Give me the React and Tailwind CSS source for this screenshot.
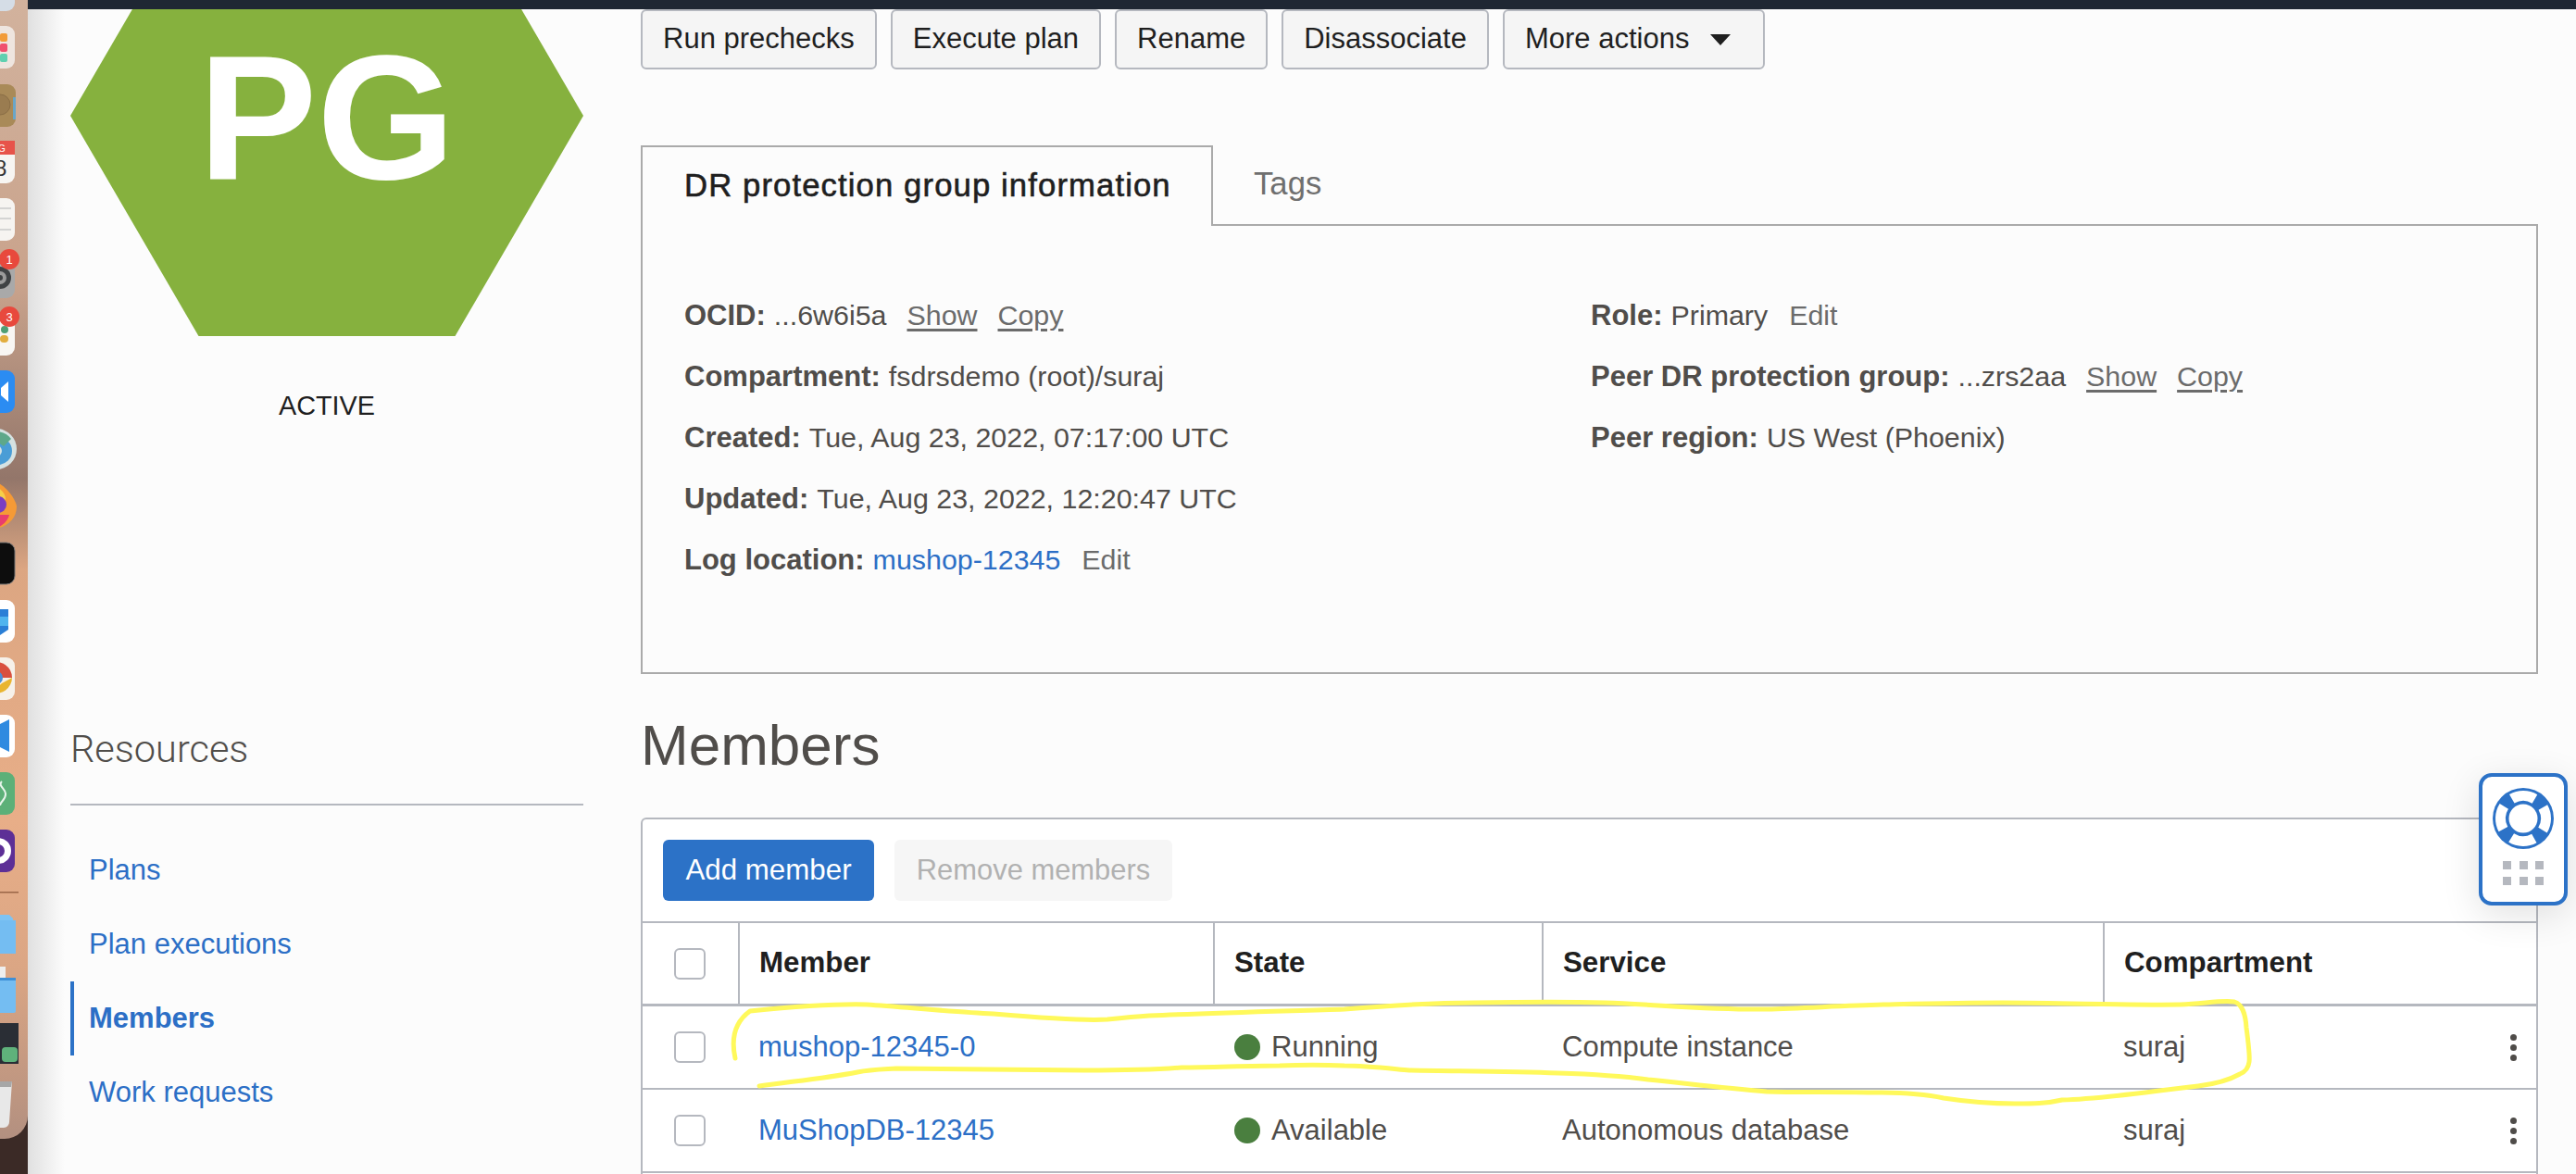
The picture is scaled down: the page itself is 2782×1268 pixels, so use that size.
import React from 'react';

const Dock = () => (
  <svg width="30" height="1268" viewBox="0 0 30 1268" className="block shrink-0">
    <defs>
      <linearGradient id="dockBg" x1="0" y1="0" x2="0" y2="1">
        <stop offset="0" stopColor="#d2b29d" />
        <stop offset="0.25" stopColor="#c9a38c" />
        <stop offset="0.42" stopColor="#93766a" />
        <stop offset="0.5" stopColor="#dca682" />
        <stop offset="0.72" stopColor="#e8ae88" />
        <stop offset="0.85" stopColor="#dba684" />
        <stop offset="1" stopColor="#b39080" />
      </linearGradient>
    </defs>
    <rect width="30" height="1268" fill="#3b2a26" />
    <path d="M0 0H30V1205a25 25 0 0 1 -25 25H0Z" fill="url(#dockBg)" />
    {/* launcher + first icons */}
    <rect x="-20" y="-30" width="36" height="42" rx="9" fill="#d5dde6" />
    <rect x="-20" y="28" width="36" height="46" rx="9" fill="#eee5df" />
    <rect x="0" y="36" width="8" height="9" rx="2" fill="#f29b38" />
    <rect x="0" y="47" width="8" height="9" rx="2" fill="#f0506e" />
    <rect x="0" y="58" width="8" height="9" rx="2" fill="#5fd0b0" />
    <rect x="-20" y="91" width="37" height="46" rx="9" fill="#a98a58" />
    <circle cx="0" cy="113" r="11" fill="#9a7c50" stroke="#8a6e46" />
    <rect x="14" y="105" width="3" height="24" fill="#6aa6c8" />
    <rect x="-20" y="152" width="36" height="46" rx="9" fill="#f7f5f2" />
    <path d="M-20 161a9 9 0 0 1 9-9H16V167H-20Z" fill="#e7534a" />
    <text x="-2" y="164" fontSize="10" fill="#fff" fontFamily="Liberation Sans">G</text>
    <text x="-6" y="190" fontSize="24" fill="#333" fontFamily="Liberation Sans">8</text>
    <rect x="-20" y="214" width="36" height="46" rx="9" fill="#f6f4f1" />
    <path d="M0 225H12M0 236H12M0 248H12" stroke="#c9c9c9" strokeWidth="1.5" />
    {/* settings */}
    <rect x="-20" y="276" width="36" height="46" rx="9" fill="#a9a9a9" />
    <circle cx="0" cy="300" r="12" fill="#3f4244" />
    <circle cx="0" cy="300" r="7" fill="#9b9b9b" />
    <circle cx="0" cy="300" r="3" fill="#3f4244" />
    <circle cx="10" cy="280" r="11" fill="#e8493d" />
    <text x="10" y="285" textAnchor="middle" fontSize="13" fill="#fff" fontFamily="Liberation Sans">1</text>
    {/* slack */}
    <rect x="-20" y="338" width="36" height="46" rx="9" fill="#f8f6f3" />
    <rect x="0" y="362" width="9" height="8" rx="4" fill="#e2ad3f" />
    <circle cx="5" cy="356" r="4" fill="#4f9e74" />
    <circle cx="10" cy="342" r="11" fill="#e8493d" />
    <text x="10" y="347" textAnchor="middle" fontSize="13" fill="#fff" fontFamily="Liberation Sans">3</text>
    {/* video */}
    <rect x="-20" y="400" width="36" height="46" rx="9" fill="#2b8cf2" />
    <path d="M9 412V434L1 427V419Z" fill="#fff" />
    {/* browsers */}
    <circle cx="-4" cy="485" r="22" fill="#d6e2e2" />
    <circle cx="-2" cy="487" r="15" fill="#4a9dd6" />
    <path d="M-14 470a18 18 0 0 1 26 4L4 482Z" fill="#5da88a" />
    <circle cx="-4" cy="487" r="6" fill="#d6e2e2" />
    <path d="M-6 520c14 4 24 22 24 27c0 14-12 24-26 24H-20V530Z" fill="#f59a36" />
    <path d="M-10 525c10 0 16 8 16 14l-16 20Z" fill="#f5d04a" />
    <circle cx="-2" cy="545" r="9" fill="#7a3dc2" />
    <path d="M-20 556H10c-2 8-10 15-20 15H-20Z" fill="#e83d6e" />
    <rect x="-20" y="586" width="36" height="45" rx="9" fill="#0d0d0d" stroke="#777" />
    <rect x="-20" y="648" width="36" height="46" rx="9" fill="#fff" />
    <path d="M0 658H9V680L0 686Z" fill="#2a7fd6" />
    <rect x="0" y="666" width="9" height="10" fill="#4fb4ee" />
    <rect x="-20" y="710" width="36" height="46" rx="9" fill="#f6f1ea" />
    <path d="M-10 716a17 17 0 0 1 23 16H-4Z" fill="#d9503f" />
    <path d="M13 732a17 17 0 0 1 -22 16L2 738Z" fill="#e9b530" />
    <circle cx="-4" cy="732" r="7" fill="#4a90d9" />
    <rect x="-20" y="772" width="36" height="46" rx="9" fill="#fff" />
    <path d="M0 782L10 777V812L0 807Z" fill="#2f8ae0" />
    <rect x="-20" y="834" width="36" height="46" rx="9" fill="#5cb078" />
    <path d="M2 844c-5 5 5 8 4 14c0 6-6 8-6 12" fill="none" stroke="#e9f5ec" strokeWidth="2" />
    <rect x="-20" y="896" width="36" height="46" rx="9" fill="#5d2f96" />
    <circle cx="-2" cy="919" r="14" fill="#fff" />
    <circle cx="-2" cy="919" r="7" fill="#5d2f96" />
    <rect x="0" y="963" width="20" height="1.5" fill="#9a6547" />
    {/* folders */}
    <path d="M-10 988H10l4 4V1030H-10Z" fill="#7ec3f3" />
    <rect x="-10" y="994" width="27" height="36" fill="#74bdf2" />
    <rect x="0" y="1044" width="6" height="12" fill="#eee" />
    <rect x="-10" y="1056" width="27" height="38" rx="2" fill="#74bdf2" />
    <rect x="-10" y="1056" width="27" height="3" fill="#3e8fd6" />
    <rect x="-10" y="1105" width="30" height="44" fill="#2a2e35" />
    <rect x="2" y="1131" width="17" height="16" rx="4" fill="#5fb27b" />
    <path d="M-6 1168H13L10 1212a6 6 0 0 1 -6 6H-6Z" fill="#e8e8e8" />
    <path d="M-6 1168H13L12 1174H-6Z" fill="#a7a7a7" />
  </svg>
);

const Btn = ({ children, className = 'px-[22px]' }) => (
  <button className={`h-[65px] bg-[#f5f5f5] border-2 border-[#b5b8bf] rounded-[6px] text-[31px] text-[#1f1f1f] flex items-center whitespace-nowrap ${className}`}>
    {children}
  </button>
);

const Detail = ({ label, children }) => (
  <div className="h-[66px] flex items-center whitespace-nowrap text-[30.4px] text-[#504d4a]">
    <span className="font-bold text-[31px] mr-[9px]">{label}</span>
    {children}
  </div>
);

const Show = ({ children }) => <span className="ml-[22px] text-[#6b6b6b] underline underline-offset-[4px]">{children}</span>;
const Edit = () => <span className="ml-[23px] text-[#6b6b6b]">Edit</span>;

const Checkbox = () => <span className="block w-[34px] h-[34px] rounded-[6px] border-2 border-[#b5b8bf] bg-white" />;

const Kebab = () => (
  <span className="flex flex-col gap-[4px] items-center">
    <span className="w-[7px] h-[7px] rounded-full bg-[#4f4c49]" />
    <span className="w-[7px] h-[7px] rounded-full bg-[#4f4c49]" />
    <span className="w-[7px] h-[7px] rounded-full bg-[#4f4c49]" />
  </span>
);

const rowGrid = 'grid grid-cols-[103px_513px_355px_606px_1fr] items-center';

const MemberRow = ({ name, state, service }) => (
  <div className={`${rowGrid} h-[90px] border-b-2 border-[#b5b8bf] text-[31px] text-[#504d4a]`}>
    <div className="pl-[34px]"><Checkbox /></div>
    <div className="pl-[22px] text-[#2c6fc6]">{name}</div>
    <div className="pl-[23px] flex items-center gap-[12px]">
      <span className="w-[28px] h-[28px] rounded-full bg-[#4a7f3f]" />
      {state}
    </div>
    <div className="pl-[22px]">{service}</div>
    <div className="pl-[22px] pr-[21px] flex items-center justify-between">
      suraj
      <Kebab />
    </div>
  </div>
);

const HeadCell = ({ children }) => (
  <div className="h-full flex items-center pl-[21px] border-l-2 border-[#b5b8bf] font-bold text-[#1f1f1f]">{children}</div>
);

const NavItem = ({ active, children }) => (
  <div className={`h-[80px] flex items-center text-[31px] text-[#2c6fc6] ${active ? 'border-l-4 border-[#2c72c7] pl-[16px] font-bold' : 'pl-[20px]'}`}>
    {children}
  </div>
);

export default function App() {
  return (
    <div className="relative flex w-[2782px] h-[1268px] overflow-hidden bg-[#fcfcfc] font-['Liberation_Sans',Arial,sans-serif]">
      <Dock />

      <div className="relative flex-1 min-w-0 flex flex-col">
        <div className="h-[10px] shrink-0 bg-[#1f2733] relative z-10" />
        <div className="flex flex-1 min-h-0">
          {/* Left column */}
          <aside className="w-[662px] shrink-0 pl-[46px] pr-[62px]">
            <div className="-mt-[123px] h-[476px] pt-[144px] bg-[#86b13e] [clip-path:polygon(25%_0,75%_0,100%_50%,75%_100%,25%_100%,0_50%)] text-center text-white font-bold text-[192px] leading-none">
              PG
            </div>
            <div className="mt-[58px] text-center text-[28.8px] leading-[34px] text-[#1f1f1f]">ACTIVE</div>
            <div className="mt-[329px] pb-[34px] border-b-2 border-[#b5b8bf] font-['Roboto',sans-serif] font-light text-[41.5px] leading-[50px] text-[#504d4a]">
              Resources
            </div>
            <nav className="mt-[30px]">
              <NavItem>Plans</NavItem>
              <NavItem>Plan executions</NavItem>
              <NavItem active>Members</NavItem>
              <NavItem>Work requests</NavItem>
            </nav>
          </aside>

          {/* Main column */}
          <main className="w-[2049px] shrink-0">
            <div className="flex gap-[15px]">
              <Btn>Run prechecks</Btn>
              <Btn>Execute plan</Btn>
              <Btn>Rename</Btn>
              <Btn>Disassociate</Btn>
              <Btn className="pl-[22px] pr-[35px]">
                More actions
                <svg width="22" height="12" viewBox="0 0 22 12" className="ml-[23px]"><path d="M0 0H22L11 12Z" fill="#1f1f1f" /></svg>
              </Btn>
            </div>

            <div className="mt-[82px] flex h-[87px]">
              <div className="w-[618px] border-2 border-b-0 border-[#aaaaaa] flex items-center pl-[45px] pb-[2px] text-[34.7px] tracking-[1.1px] text-[#1f1f1f] [-webkit-text-stroke:0.6px_#1f1f1f]">
                DR protection group information
              </div>
              <div className="flex-1 border-b-2 border-[#aaaaaa] flex items-center pl-[44px] pb-[2px] text-[34.7px] text-[#6f6f6f]">Tags</div>
            </div>
            <div className="h-[484px] border-2 border-t-0 border-[#aaaaaa] pt-[64px] pl-[45px] grid grid-cols-[979px_1fr]">
              <div>
                <Detail label="OCID:">...6w6i5a<Show>Show</Show><Show>Copy</Show></Detail>
                <Detail label="Compartment:">fsdrsdemo (root)/suraj</Detail>
                <Detail label="Created:">Tue, Aug 23, 2022, 07:17:00 UTC</Detail>
                <Detail label="Updated:">Tue, Aug 23, 2022, 12:20:47 UTC</Detail>
                <Detail label="Log location:"><span className="text-[#2c6fc6]">mushop-12345</span><Edit /></Detail>
              </div>
              <div>
                <Detail label="Role:">Primary<Edit /></Detail>
                <Detail label="Peer DR protection group:">...zrs2aa<Show>Show</Show><Show>Copy</Show></Detail>
                <Detail label="Peer region:">US West (Phoenix)</Detail>
              </div>
            </div>

            <h2 className="mt-[42px] text-[62px] leading-[70px] text-[#504d4a]">Members</h2>

            <div className="mt-[43px] border-2 border-b-0 border-[#b5b8bf] rounded-t-[6px] bg-white h-[500px]">
              <div className="h-[110px] pt-[22px] pl-[22px] flex gap-[22px] items-start">
                <button className="h-[66px] w-[228px] rounded-[6px] bg-[#2c72c7] text-white text-[31.3px]">Add member</button>
                <button className="h-[66px] w-[300px] rounded-[6px] bg-[#f6f6f6] text-[#b1b1b1] text-[30.9px]">Remove members</button>
              </div>
              <div className={`${rowGrid} h-[92px] border-y-[3px] border-[#b5b8bf] text-[31.3px] border-t-2`}>
                <div className="pl-[34px]"><Checkbox /></div>
                <HeadCell>Member</HeadCell>
                <HeadCell>State</HeadCell>
                <HeadCell>Service</HeadCell>
                <HeadCell>Compartment</HeadCell>
              </div>
              <MemberRow name="mushop-12345-0" state="Running" service="Compute instance" />
              <MemberRow name="MuShopDB-12345" state="Available" service="Autonomous database" />
            </div>
          </main>
        </div>

        {/* window edge shadow */}
        <div className="absolute left-0 top-[10px] bottom-0 w-[40px] bg-gradient-to-r from-[#e0e0e0] to-transparent pointer-events-none" />
      </div>

      {/* help widget */}
      <div className="absolute left-[2677px] top-[835px] w-[96px] h-[143px] bg-white border-4 border-[#2c72c7] rounded-[14px] shadow-[0_10px_40px_rgba(0,0,0,0.12)] flex flex-col items-center pt-[11px] gap-[12px]">
        <svg width="68" height="68" viewBox="-34 -34 68 68">
          <circle r="33" fill="#2c72c7" />
          <circle r="24.5" fill="none" stroke="#fff" strokeWidth="11" strokeDasharray="25.66 12.83" transform="rotate(-120)" />
          <circle r="15.5" fill="#fff" />
        </svg>
        <div className="grid grid-cols-3 gap-x-[8.5px] gap-y-[8px]">
          {[0, 1, 2, 3, 4, 5].map((i) => (
            <span key={i} className="w-[9px] h-[9px] bg-[#b5b8bf]" />
          ))}
        </div>
      </div>

      {/* yellow marker annotation */}
      <svg className="absolute left-0 top-0 pointer-events-none" width="2782" height="1268" viewBox="0 0 2782 1268" fill="none">
        <path
          d="M794 1143C790 1125 792 1105 810 1092C850 1088 900 1084 936 1085C980 1088 1030 1093 1073 1095C1120 1099 1170 1103 1196 1101C1215 1099 1225 1098 1241 1097C1310 1094 1390 1092 1452 1090C1500 1086 1550 1083 1592 1083C1650 1082 1700 1082 1733 1083C1790 1085 1850 1091 1908 1090C1950 1089 1990 1086 2036 1085C2080 1084 2120 1083 2163 1083C2230 1083 2300 1086 2355 1085C2380 1084 2400 1080 2413 1082C2422 1085 2425 1095 2426 1110C2428 1125 2430 1140 2429 1147C2428 1155 2424 1158 2419 1160C2405 1168 2390 1171 2374 1173C2320 1179 2270 1187 2227 1188C2210 1192 2195 1192 2176 1192C2150 1192 2125 1190 2099 1186C2075 1181 2050 1180 2023 1180C1980 1179 1940 1180 1908 1179C1860 1175 1820 1170 1780 1166C1750 1162 1715 1160 1683 1159C1630 1157 1575 1157 1522 1156C1500 1154 1475 1151 1452 1151C1430 1150 1405 1150 1382 1151C1345 1151 1310 1153 1276 1153C1240 1156 1205 1156 1171 1156C1100 1155 1030 1154 968 1154C950 1155 940 1155 926 1158C890 1165 855 1168 820 1173"
          stroke="#fff95b"
          strokeWidth="5"
          strokeLinecap="round"
          strokeLinejoin="round"
        />
      </svg>
    </div>
  );
}
